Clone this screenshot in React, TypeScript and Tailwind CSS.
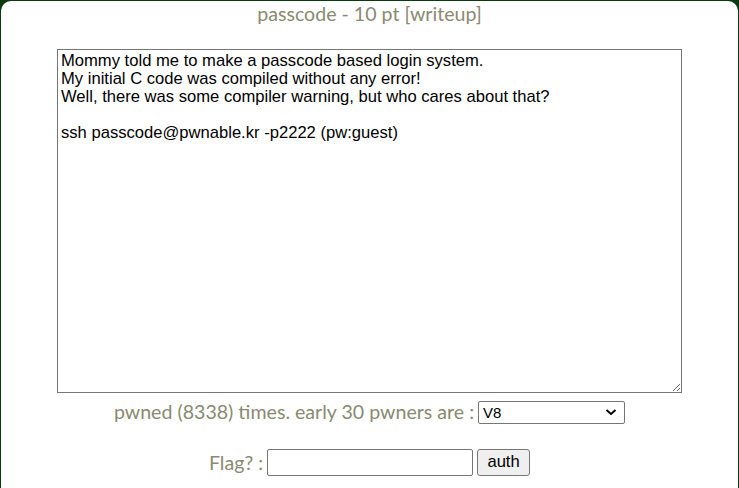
import React from "react";

export default function App() {
  const desc =
    "Mommy told me to make a passcode based login system.\nMy initial C code was compiled without any error!\nWell, there was some compiler warning, but who cares about that?\n\nssh passcode@pwnable.kr -p2222 (pw:guest)";
  return (
    <div className="w-[739px] h-[488px] overflow-hidden bg-[#0c3a10] pt-[1px] px-[1px]">
      <div className="h-[600px] bg-white rounded-t-[10px] pt-[1px] flex flex-col items-center font-['Lato','Noto_Sans',sans-serif] text-[#8a8a72]">
        <div className="text-[19.6px] leading-[24px] text-center">passcode - 10 pt [writeup]</div>
        <textarea
          readOnly
          defaultValue={desc}
          className="mt-[23px] w-[625px] h-[344px] border border-[#767676] bg-white px-[3px] py-[2px] text-[16.6px] leading-[18px] text-black font-['Liberation_Sans',Arial,sans-serif] outline-none"
        />
        <div className="mt-[7px] h-[23px] flex items-center gap-[4px]">
          <span className="text-[19.6px] leading-[24px]">pwned (8338) times. early 30 pwners are :</span>
          <div className="relative w-[147px] h-[23px]">
            <select className="appearance-none w-full h-full border border-[#767676] rounded-[2px] bg-white pl-[4px] text-[15px] text-black font-['Liberation_Sans',Arial,sans-serif] outline-none">
              <option>V8</option>
            </select>
            <svg
              className="absolute right-[8px] top-[8px] pointer-events-none bg-white"
              width="12"
              height="8"
              viewBox="0 0 12 8"
            >
              <path d="M1.5 2 L6 6 L10.5 2" fill="none" stroke="#000" strokeWidth="2" />
            </svg>
          </div>
        </div>
        <div className="mt-[26px] h-[27px] flex items-center gap-[4px]">
          <span className="text-[19.6px] leading-[24px]">Flag? :</span>
          <input className="w-[206px] h-[27px] border border-[#767676] rounded-[2px] bg-white px-[2px] outline-none" />
          <button className="w-[53px] h-[27px] border border-[#767676] rounded-[3px] bg-[#efefef] text-[16.6px] text-black font-['Liberation_Sans',Arial,sans-serif]">
            auth
          </button>
        </div>
      </div>
    </div>
  );
}
